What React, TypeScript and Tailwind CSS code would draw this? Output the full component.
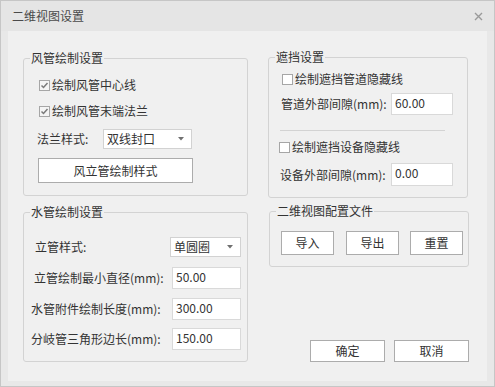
import React from "react";

function Group({ title, className = "", children }: { title: string; className?: string; children: React.ReactNode }) {
  return (
    <div className={`relative rounded-[3px] border border-[#d3d3d3] ${className}`}>
      <span className="absolute -top-[9px] left-[6px] bg-[#f0f0f0] px-[1px] leading-[16px]">{title}</span>
      {children}
    </div>
  );
}

function Check({ label, checked, className = "" }: { label: string; checked?: boolean; className?: string }) {
  return (
    <div className={`flex h-4 items-center ${className}`}>
      <span className={`flex h-[11px] w-[11px] items-center justify-center border border-[#a6a6a6] ${checked ? "bg-[#f4f4f4]" : "bg-white"}`}>
        {checked && (
          <svg width="9" height="9" viewBox="0 0 9 9">
            <path d="M1.5 4.5 L3.5 6.5 L7.5 2" fill="none" stroke="#7a7a7a" strokeWidth="1.5" />
          </svg>
        )}
      </span>
      <span className="ml-[2px] leading-[16px]">{label}</span>
    </div>
  );
}

function Field({ value, className = "" }: { value: string; className?: string }) {
  return (
    <div className={`border border-[#d9d9d9] bg-white pl-[3px] pt-[1px] leading-[16px] ${className}`}>{value}</div>
  );
}

function Select({ value, className = "" }: { value: string; className?: string }) {
  return (
    <div className={`flex h-[20px] items-center justify-between border border-[#d2d2d2] bg-white pl-[3px] pr-[7px] ${className}`}>
      <span className="leading-[16px]">{value}</span>
      <svg width="6" height="4" viewBox="0 0 6 4">
        <path d="M0 0 H6 L3 3.5 Z" fill="#707070" />
      </svg>
    </div>
  );
}

function Btn({ label, className = "" }: { label: string; className?: string }) {
  return (
    <div className={`flex items-center justify-center border border-[#acacac] bg-white leading-[16px] ${className}`}>{label}</div>
  );
}

export default function App() {
  return (
    <div className="flex h-[387px] w-[495px] flex-col border border-[#c6c6c6] bg-[#e8e8e8] font-['Noto_Sans_CJK_SC','Microsoft_YaHei',sans-serif] text-[12px] text-[#333]">
      <div className="flex h-[30px] items-center justify-between bg-[#e5e5e5] pl-[11px] pr-[11px]">
        <span className="leading-[16px] text-[#4a4a4a]">二维视图设置</span>
        <svg width="9" height="9" viewBox="0 0 9 9">
          <path d="M1 1 L8 8 M8 1 L1 8" stroke="#9a9a9a" strokeWidth="1.4" />
        </svg>
      </div>
      <div className="mx-[7px] flex h-[350px] bg-[#f0f0f0]">
        {/* left column */}
        <div className="ml-[15px] flex w-[225px] flex-col pt-[27px]">
          <Group title="风管绘制设置">
            <div className="pb-[12px] pl-[13px] pt-[18px]">
              <Check label="绘制风管中心线" checked className="ml-[2px]" />
              <Check label="绘制风管末端法兰" checked className="ml-[2px] mt-[10px]" />
              <div className="mt-[10px] flex items-center">
                <span className="w-[66px] leading-[16px]">法兰样式:</span>
                <Select value="双线封口" className="w-[89px]" />
              </div>
              <Btn label="风立管绘制样式" className="ml-[1px] mt-[9px] h-[25px] w-[155px]" />
            </div>
          </Group>
          <Group title="水管绘制设置" className="mt-[16px]">
            <div className="pb-[11px] pl-[11px] pt-[24px]">
              <div className="flex h-[20px] items-center">
                <span className="w-[135px] leading-[16px]">立管样式:</span>
                <Select value="单圆圈" className="w-[71px]" />
              </div>
              <div className="mt-[10px] flex h-[22px] items-center">
                <span className="-ml-px w-[138px] leading-[16px]">立管绘制最小直径(mm):</span>
                <Field value="50.00" className="h-[22px] w-[69px]" />
              </div>
              <div className="mt-[9px] flex h-[22px] items-center">
                <span className="-ml-[4px] w-[141px] leading-[16px]">水管附件绘制长度(mm):</span>
                <Field value="300.00" className="h-[22px] w-[69px]" />
              </div>
              <div className="mt-[8px] flex h-[22px] items-center">
                <span className="-ml-[4px] w-[141px] leading-[16px]">分岐管三角形边长(mm):</span>
                <Field value="150.00" className="h-[22px] w-[69px]" />
              </div>
            </div>
          </Group>
        </div>
        {/* right column */}
        <div className="ml-[20px] flex w-[201px] flex-col pt-[26px]">
          <Group title="遮挡设置" className="w-[200px]">
            <div className="pb-[11px] pt-[13px]">
              <Check label="绘制遮挡管道隐藏线" className="ml-[13px]" />
              <div className="mt-[6px] flex h-[22px] items-center">
                <span className="ml-[12px] w-[110px] leading-[16px]">管道外部间隙(mm):</span>
                <Field value="60.00" className="h-[22px] w-[62px]" />
              </div>
              <div className="ml-[11px] mt-[15px] h-px w-[165px] bg-[#d3d3d3]" />
              <Check label="绘制遮挡设备隐藏线" className="ml-[10px] mt-[8px]" />
              <div className="mt-[8px] flex h-[23px] items-center">
                <span className="ml-[11px] w-[111px] leading-[16px]">设备外部间隙(mm):</span>
                <Field value="0.00" className="h-[23px] w-[62px]" />
              </div>
            </div>
          </Group>
          <Group title="二维视图配置文件" className="ml-px mt-[13px] w-[200px]">
            <div className="flex pb-[11px] pl-[11px] pt-[19px]">
              <Btn label="导入" className="h-[24px] w-[53px]" />
              <Btn label="导出" className="ml-[12px] h-[24px] w-[53px]" />
              <Btn label="重置" className="ml-[11px] h-[24px] w-[53px]" />
            </div>
          </Group>
          <div className="mt-[73px] flex justify-end">
            <Btn label="确定" className="h-[22px] w-[75px]" />
            <Btn label="取消" className="ml-[9px] h-[22px] w-[75px]" />
          </div>
        </div>
      </div>
    </div>
  );
}
